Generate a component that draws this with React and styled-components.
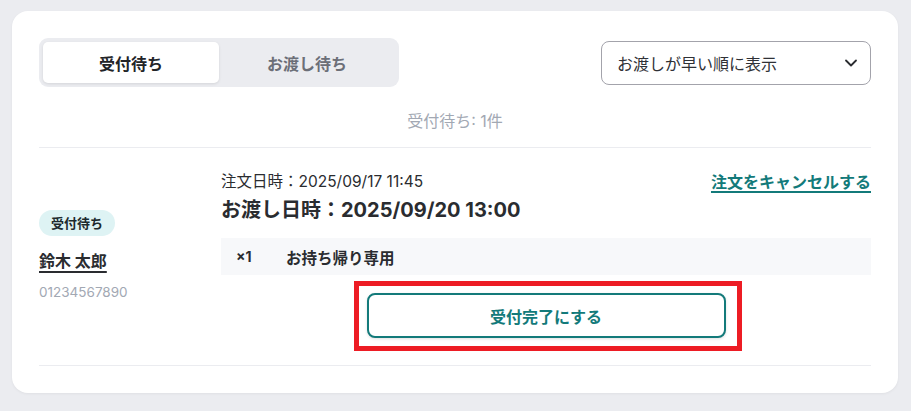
import React from "react";
import styled, { createGlobalStyle } from "styled-components";
import { ChevronDown } from "lucide-react";

const Global = createGlobalStyle`
  html, body { margin: 0; padding: 0; background: #ebecf0; }
  body { font-family: Inter, "Noto Sans CJK JP", sans-serif; color: #2a2c30; }
  * { box-sizing: border-box; }
`;

const Page = styled.div`
  padding: 11px 13px 18px 12px;
`;

const Card = styled.div`
  background: #fff;
  border-radius: 16px;
  padding: 27px;
  box-shadow: 0 1px 3px rgba(0, 0, 0, 0.05);
`;

const Header = styled.div`
  display: flex;
  align-items: center;
  justify-content: space-between;
`;

const Tabs = styled.div`
  display: flex;
  width: 360px;
  height: 49px;
  padding: 4px;
  background: #ebecf0;
  border-radius: 9px;
`;

const Tab = styled.button`
  flex: 1;
  border: none;
  border-radius: 5px;
  font-family: inherit;
  font-size: 16px;
  font-weight: 700;
  cursor: pointer;
  background: ${(p) => (p.$active ? "#fff" : "transparent")};
  color: ${(p) => (p.$active ? "#222428" : "#6c6f78")};
  box-shadow: ${(p) => (p.$active ? "0 1px 3px rgba(0,0,0,0.1)" : "none")};
`;

const Select = styled.div`
  width: 270px;
  height: 44px;
  border: 1px solid #a3a3ab;
  border-radius: 8px;
  display: flex;
  align-items: center;
  justify-content: space-between;
  padding: 0 9px 0 15px;
  font-size: 16px;
  color: #2f3136;
`;

const Count = styled.div`
  margin-top: 24px;
  padding-bottom: 16px;
  text-align: center;
  font-size: 16px;
  line-height: 20px;
  color: #a2a8b3;
  border-bottom: 1px solid #ebecf0;
`;

const Item = styled.div`
  display: grid;
  grid-template-columns: 182px 1fr;
  align-items: center;
  padding: 24px 0 27px;
  border-bottom: 1px solid #ebecf0;
`;

const Customer = styled.div`
  display: flex;
  flex-direction: column;
  align-items: flex-start;
`;

const Badge = styled.span`
  display: inline-flex;
  align-items: center;
  height: 26px;
  padding: 0 12px;
  border-radius: 13px;
  background: #def3f4;
  color: #1d2a2e;
  font-size: 13px;
  font-weight: 700;
`;

const Name = styled.a`
  margin-top: 14px;
  font-size: 16px;
  line-height: 22px;
  font-weight: 700;
  color: #2a2c30;
  text-decoration: underline;
  text-underline-offset: 4px;
  text-decoration-thickness: 2px;
`;

const Phone = styled.div`
  margin-top: 11px;
  font-size: 13.5px;
  line-height: 18px;
  color: #a2a8b3;
`;

const Order = styled.div`
  display: flex;
  flex-direction: column;
`;

const TopRow = styled.div`
  display: flex;
  align-items: center;
  justify-content: space-between;
  height: 20px;
`;

const OrderedAt = styled.div`
  font-size: 15.5px;
  line-height: 20px;
  color: #2a2c30;
`;

const CancelLink = styled.a`
  font-size: 16px;
  line-height: 20px;
  font-weight: 700;
  color: #137a7a;
  text-decoration: underline;
  text-underline-offset: 3px;
  text-decoration-thickness: 1.5px;
`;

const PickupAt = styled.div`
  margin-top: 5px;
  font-size: 20px;
  line-height: 26px;
  font-weight: 700;
  color: #2a2c30;
`;

const Product = styled.div`
  margin-top: 15px;
  height: 37px;
  display: flex;
  align-items: center;
  padding: 0 15px;
  background: #f7f8fa;
  font-weight: 700;
  color: #2a2c30;
`;

const Qty = styled.span`
  width: 50px;
  font-size: 14px;
`;

const ProductName = styled.span`
  font-size: 15.5px;
`;

const ButtonWrap = styled.div`
  position: relative;
  align-self: center;
  margin-top: 18px;
`;

const Highlight = styled.div`
  position: absolute;
  top: -12px;
  left: -13px;
  right: -16px;
  bottom: -13px;
  border: 5px solid #ed1c24;
  pointer-events: none;
`;

const CompleteButton = styled.button`
  display: block;
  width: 359px;
  height: 45px;
  border: 2px solid #137a7a;
  border-radius: 8px;
  background: #fff;
  color: #137a7a;
  font-family: inherit;
  font-size: 16px;
  font-weight: 700;
  box-shadow: 0 1px 3px rgba(0, 0, 0, 0.12);
  cursor: pointer;
`;

export default function App() {
  return (
    <Page>
      <Global />
      <Card>
        <Header>
          <Tabs>
            <Tab $active>受付待ち</Tab>
            <Tab>お渡し待ち</Tab>
          </Tabs>
          <Select>
            <span>お渡しが早い順に表示</span>
            <ChevronDown size={20} strokeWidth={2.2} color="#2a2c30" />
          </Select>
        </Header>
        <Count>受付待ち: 1件</Count>
        <Item>
          <Customer>
            <Badge>受付待ち</Badge>
            <Name>鈴木 太郎</Name>
            <Phone>01234567890</Phone>
          </Customer>
          <Order>
            <TopRow>
              <OrderedAt>注文日時：2025/09/17 11:45</OrderedAt>
              <CancelLink>注文をキャンセルする</CancelLink>
            </TopRow>
            <PickupAt>お渡し日時：2025/09/20 13:00</PickupAt>
            <Product>
              <Qty>×1</Qty>
              <ProductName>お持ち帰り専用</ProductName>
            </Product>
            <ButtonWrap>
              <CompleteButton>受付完了にする</CompleteButton>
              <Highlight />
            </ButtonWrap>
          </Order>
        </Item>
      </Card>
    </Page>
  );
}
